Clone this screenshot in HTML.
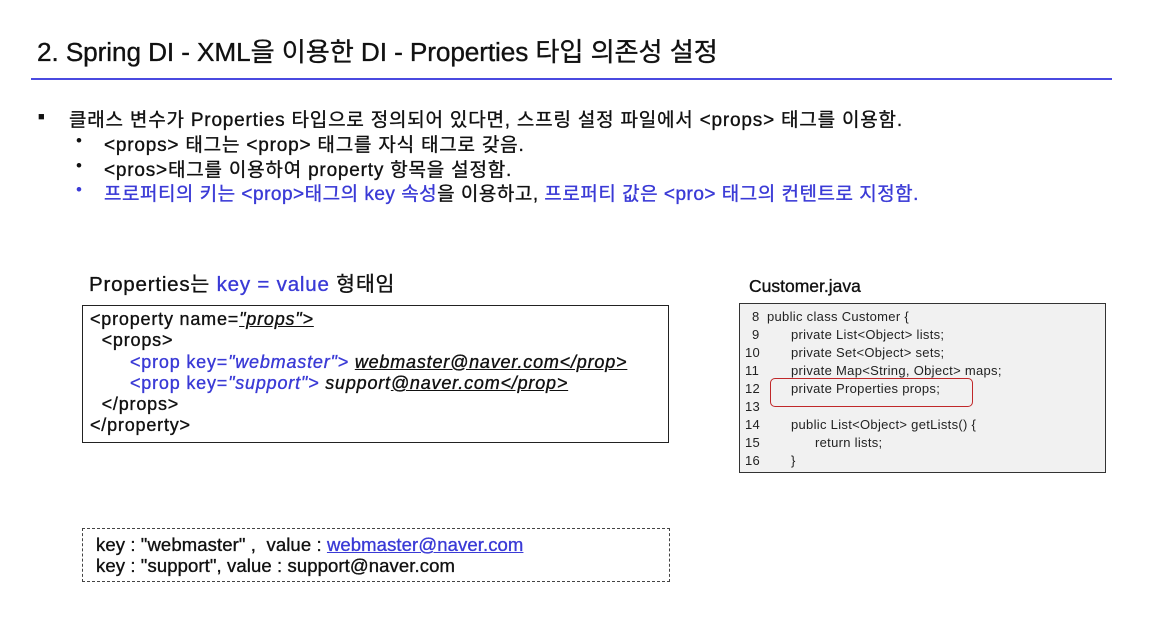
<!DOCTYPE html>
<html><head><meta charset="utf-8"><style>
body{margin:0;width:1150px;height:629px;background:#fff;position:relative;overflow:hidden;font-family:"Liberation Sans","Noto Sans CJK KR",sans-serif;color:#111}
.a{position:absolute;white-space:nowrap}
.b{color:#3a3ad6}
.m{-webkit-text-stroke:0.35px currentColor}
.c{position:absolute;font-family:'Liberation Sans Narrow','Liberation Sans',sans-serif;font-size:13px;color:#222;letter-spacing:0.3px;white-space:nowrap}
</style></head><body>
<div class="a m" style="left:37px;top:31px;font-size:26.2px;letter-spacing:-0.1px">2. Spring DI - XML을 이용한 DI - Properties 타입 의존성 설정</div>
<div class="a" style="left:31px;top:78px;width:1081px;height:2px;background:#4a4ae0"></div>
<div class="a" style="left:38px;top:111px;font-size:11px">■</div>
<div class="a m" style="left:69px;top:105px;font-size:19px;letter-spacing:0.8px">클래스 변수가 Properties 타입으로 정의되어 있다면, 스프링 설정 파일에서 &lt;props&gt; 태그를 이용함.</div>
<div class="a" style="left:76px;top:131px;font-size:17px">•</div>
<div class="a m" style="left:104px;top:130px;font-size:19px;letter-spacing:0.8px">&lt;props&gt; 태그는 &lt;prop&gt; 태그를 자식 태그로 갖음.</div>
<div class="a" style="left:76px;top:156px;font-size:17px">•</div>
<div class="a m" style="left:104px;top:155px;font-size:19px;letter-spacing:0.8px">&lt;pros&gt;태그를 이용하여 property 항목을 설정함.</div>
<div class="a b" style="left:76px;top:180px;font-size:17px">•</div>
<div class="a m" style="left:104px;top:179px;font-size:19px;letter-spacing:0.5px"><span class="b">프로퍼티의 키는 &lt;prop&gt;태그의 key 속성</span>을 이용하고, <span class="b">프로퍼티 값은 &lt;pro&gt; 태그의 컨텐트로 지정함.</span></div>

<div class="a m" style="left:89px;top:267px;font-size:20.5px;letter-spacing:0.8px">Properties는 <span class="b">key = value</span> 형태임</div>
<div class="a" style="left:82px;top:305px;width:585px;height:136px;border:1.5px solid #222"></div>
<div class="a m" style="left:90px;top:309px;font-size:18px;line-height:21.3px;letter-spacing:0.8px">
&lt;property name=<i><u>"props"&gt;</u></i><br>
&nbsp;&nbsp;&lt;props&gt;<br>
<span style="padding-left:40px" class="b">&lt;prop key=<i>"webmaster"&gt;</i></span> <i><u>webmaster@naver.com&lt;/prop&gt;</u></i><br>
<span style="padding-left:40px" class="b">&lt;prop key=<i>"support"&gt;</i></span> <i>support<u>@naver.com&lt;/prop&gt;</u></i><br>
&nbsp;&nbsp;&lt;/props&gt;<br>
&lt;/property&gt;</div>

<div class="a" style="left:82px;top:528px;width:586px;height:52px;border:1.5px dashed #444"></div>
<div class="a m" style="left:96px;top:534px;font-size:18.5px;line-height:21px;letter-spacing:0.1px">key : "webmaster" ,&nbsp; value : <u class="b">webmaster@naver.com</u><br>key : "support", value : support@naver.com</div>

<div class="a m" style="left:749px;top:276px;font-size:17.5px">Customer.java</div>
<div class="a" style="left:739px;top:303px;width:365px;height:168px;border:1px solid #333;background:#f1f1f1"></div>
<div class="c" style="left:752px;top:309px">8</div><div class="c" style="left:767px;top:309px">public class Customer {</div>
<div class="c" style="left:752px;top:327px">9</div><div class="c" style="left:791px;top:327px">private List&lt;Object&gt; lists;</div>
<div class="c" style="left:745px;top:345px">10</div><div class="c" style="left:791px;top:345px">private Set&lt;Object&gt; sets;</div>
<div class="c" style="left:745px;top:363px">11</div><div class="c" style="left:791px;top:363px">private Map&lt;String, Object&gt; maps;</div>
<div class="c" style="left:745px;top:381px">12</div><div class="c" style="left:791px;top:381px">private Properties props;</div>
<div class="c" style="left:745px;top:399px">13</div>
<div class="c" style="left:745px;top:417px">14</div><div class="c" style="left:791px;top:417px">public List&lt;Object&gt; getLists() {</div>
<div class="c" style="left:745px;top:435px">15</div><div class="c" style="left:815px;top:435px">return lists;</div>
<div class="c" style="left:745px;top:453px">16</div><div class="c" style="left:791px;top:453px">}</div>
<div class="a" style="left:770px;top:378px;width:201px;height:27px;border:1.5px solid #c0282a;border-radius:5px"></div>
</body></html>
